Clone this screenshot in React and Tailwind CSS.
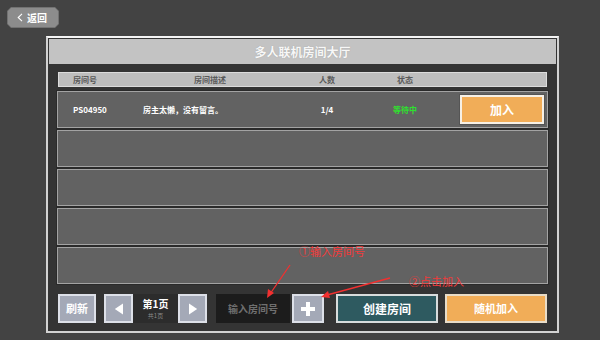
import React from "react";

const font = { fontFamily: '"Noto Sans CJK SC", "Noto Sans", sans-serif' };

function GrayBtn({ className = "", children }) {
  return (
    <div className={"flex items-center justify-center bg-[#a4a9b7] border-2 border-[#dde0e8] h-[29px] " + className}>
      {children}
    </div>
  );
}

function Row({ children }) {
  return (
    <div className="h-[37px] bg-[#626262] border border-[#a3a3a3] shadow-[0_0_0_1px_#2a2a2a] flex items-center">
      {children}
    </div>
  );
}

export default function App() {
  return (
    <div style={font} className="relative w-[600px] h-[340px] bg-[#434343] overflow-hidden">
      {/* back button */}
      <div className="pt-[7px] pl-[7px]">
        <div className="w-[52px] h-[21px] bg-[#727272] [clip-path:polygon(4px_0,calc(100%-4px)_0,100%_4px,100%_calc(100%-4px),calc(100%-4px)_100%,4px_100%,0_calc(100%-4px),0_4px)] p-[1px]">
          <div className="w-full h-full bg-[#8c8c8c] [clip-path:polygon(3px_0,calc(100%-3px)_0,100%_3px,100%_calc(100%-3px),calc(100%-3px)_100%,3px_100%,0_calc(100%-3px),0_3px)] flex items-center pl-[9px] text-white">
            <svg width="6" height="9" viewBox="0 0 6 9" className="mr-[4px]">
              <path d="M5 0.8 L1.2 4.5 L5 8.2" stroke="#fff" strokeWidth="1.1" fill="none" />
            </svg>
            <span className="text-[10px] leading-none font-bold">返回</span>
          </div>
        </div>
      </div>

      {/* panel */}
      <div className="ml-[46px] mt-[8px] w-[513px] border-2 border-[#d2d2d2] border-t-[#f4f4f4] bg-[#343434] p-[1px]">
        <div className="h-[25px] bg-[#c3c3c3] flex items-center justify-center">
          <span className="text-[12px] font-bold text-[#f7f7f7] [text-shadow:0_0_1px_#999]">多人联机房间大厅</span>
        </div>

        <div className="px-[8px] pt-[8px] pb-[7px]">
          {/* header */}
          <div className="mx-[1px] h-[15px] bg-[#bebebe] border border-[#dcdcdc] flex items-center text-[8px] font-bold text-[#5a5a5a] leading-none">
            <div className="w-[14px]" />
            <div className="w-[77px]">房间号</div>
            <div className="w-[120px] text-center">房间描述</div>
            <div className="w-[37px]" />
            <div className="w-[40px] text-center">人数</div>
            <div className="w-[38px]" />
            <div className="w-[40px] text-center">状态</div>
          </div>

          {/* rows */}
          <div className="mt-[4px] flex flex-col gap-[2px]">
            <Row>
              <div className="w-[15px]" />
              <div className="w-[70px] text-[8px] font-bold text-white leading-none">PS04950</div>
              <div className="w-[164px] text-[8px] font-bold text-white leading-none">房主太懒，没有留言。</div>
              <div className="w-[40px] text-center text-[8px] font-bold text-white leading-none">1/4</div>
              <div className="w-[38px]" />
              <div className="w-[40px] text-center text-[8px] font-bold text-[#2ee02e] leading-none">等待中</div>
              <div className="ml-auto mr-[3px] w-[84px] h-[29px] bg-[#f1ad58] border-2 border-[#f6f0e6] shadow-[0_0_0_1px_#555] flex items-center justify-center text-white text-[12px] font-bold">
                加入
              </div>
            </Row>
            <Row />
            <Row />
            <Row />
            <Row />
          </div>

          {/* bottom bar */}
          <div className="mt-[10px] flex items-center h-[29px]">
            <GrayBtn className="w-[38px] ml-[1px]">
              <span className="text-white text-[11px] font-bold">刷新</span>
            </GrayBtn>
            <GrayBtn className="w-[29px] ml-[8px]">
              <svg width="10" height="12" viewBox="0 0 10 12"><path d="M9 0.5 L0.8 6 L9 11.5 Z" fill="#fff" /></svg>
            </GrayBtn>
            <div className="w-[45px] h-[29px] bg-[#2c2c2c] flex flex-col items-center justify-center">
              <div className="h-[14px] text-white text-[10px] font-bold leading-[14px]">第1页</div>
              <div className="h-[9px] text-[#8a8a8a] text-[6px] leading-[9px]">共1页</div>
            </div>
            <GrayBtn className="w-[29px]">
              <svg width="10" height="12" viewBox="0 0 10 12"><path d="M1 0.5 L9.2 6 L1 11.5 Z" fill="#fff" /></svg>
            </GrayBtn>
            <div className="w-[74px] h-[29px] ml-[9px] bg-[#1c1c1c] flex items-center justify-center">
              <span className="text-[#6f6f6f] text-[10px] font-bold">输入房间号</span>
            </div>
            <GrayBtn className="w-[32px] ml-[2px]">
              <svg width="16" height="16" viewBox="0 0 16 16"><path d="M8 1 V15 M1 8 H15" stroke="#fff" strokeWidth="4" /></svg>
            </GrayBtn>
            <div className="w-[102px] h-[29px] ml-[12px] bg-[#2e5a60] border-2 border-[#d8dcdc] flex items-center justify-center">
              <span className="text-white text-[12px] font-bold">创建房间</span>
            </div>
            <div className="w-[102px] h-[29px] ml-[7px] bg-[#f1ad58] border-2 border-[#e8dcc8] flex items-center justify-center">
              <span className="text-white text-[11px] font-bold">随机加入</span>
            </div>
          </div>
        </div>
      </div>

      {/* annotations */}
      <div className="absolute left-[299px] top-[246px] text-[11px] leading-none text-[#f23a3a]">①输入房间号</div>
      <div className="absolute left-[409px] top-[276px] text-[11px] leading-none text-[#f23a3a]">②点击加入</div>
      <svg className="absolute left-0 top-0 pointer-events-none" width="600" height="340" viewBox="0 0 600 340">
        <line x1="290" y1="265" x2="270" y2="294" stroke="#f23030" strokeWidth="1.3" />
        <path d="M267 298 L268 289 L274 293 Z" fill="#f23030" />
        <line x1="390" y1="278" x2="327" y2="295" stroke="#f23030" strokeWidth="1.3" />
        <path d="M321 297 L328 291 L330 298 Z" fill="#f23030" />
      </svg>
    </div>
  );
}
